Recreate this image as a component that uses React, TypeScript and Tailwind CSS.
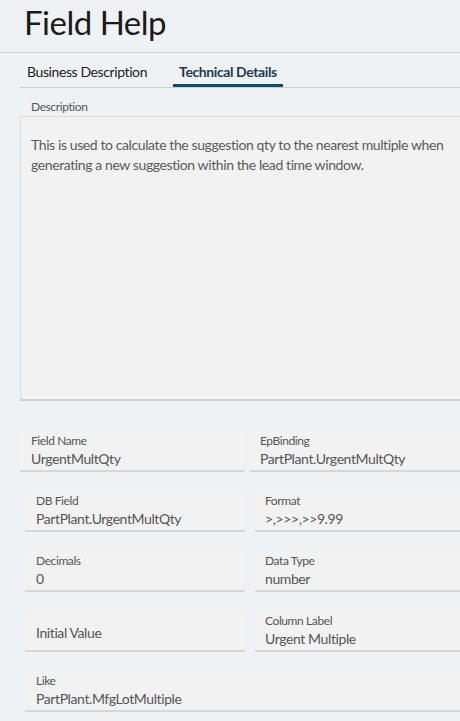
import React from "react";

const font = { fontFamily: '"Lato", "Liberation Sans", sans-serif' };

interface FieldProps {
  label: string;
  value?: string;
  className?: string;
  pad?: string;
}

function Field({ label, value, className = "", pad = "pl-[11px]" }: FieldProps) {
  return (
    <div className={`flex h-10 flex-col justify-end border-b-2 border-[#d4d6d8] bg-[#f2f2f2] pb-[1px] tracking-[-0.4px] ${pad} ${className}`}>
      {value !== undefined ? (
        <>
          <span className="text-[12px] leading-[16px] text-[#555]">{label}</span>
          <span className="text-[14px] leading-[20px] text-[#555]">{value}</span>
        </>
      ) : (
        <span className="pb-[7px] text-[14px] leading-[19px] text-[#555]">{label}</span>
      )}
    </div>
  );
}

export default function App() {
  return (
    <div className="min-h-[721px] w-[460px] overflow-hidden bg-[#eff2f5]" style={font}>
      <div className="h-[53px] border-b border-[#cfd2d5] pl-6 pt-[2px]">
        <h1 className="text-[33px] leading-[40px] tracking-[-0.5px] text-[#1a1a1a]">Field Help</h1>
      </div>

      <div className="ml-5 flex h-[35px] items-end border-b border-[#cfd2d5] tracking-[-0.4px]">
        <button className="px-[7px] pb-[5px] text-[14px] text-[#222]">Business Description</button>
        <button className="ml-[19px] border-b-[3px] border-[#0f4c70] px-[6px] pb-[2px] text-[14px] font-bold text-[#1d3a52]">
          Technical Details
        </button>
      </div>

      <div className="ml-5">
        <div className="pl-[11px] pt-[11px] text-[12px] leading-[16px] tracking-[-0.4px] text-[#555]">Description</div>
        <div className="mt-[1px] h-[285px] border-t border-l border-b-2 border-[#dcdcdc] border-b-[#cfd2d5] bg-[#f2f2f2] pl-[10px] pr-[6px] pt-[18px]">
          <p className="text-[14px] leading-[20px] tracking-[-0.4px] text-[#5a5a5a]">
            This is used to calculate the suggestion qty to the nearest multiple when generating a new suggestion
            within the lead time window.
          </p>
        </div>
      </div>

      <div className="ml-5 mt-[31px] grid grid-cols-[225px_1fr] gap-x-[5px]">
        <Field label="Field Name" value="UrgentMultQty" />
        <Field label="EpBinding" value="PartPlant.UrgentMultQty" pad="pl-[10px]" />
      </div>

      <div className="ml-[25px] mt-5 grid grid-cols-[220px_1fr] gap-x-[10px] gap-y-5">
        <Field label="DB Field" value="PartPlant.UrgentMultQty" />
        <Field label="Format" value=">,>>>,>>9.99" pad="pl-[10px]" />
        <Field label="Decimals" value="0" />
        <Field label="Data Type" value="number" pad="pl-[10px]" />
        <Field label="Initial Value" />
        <Field label="Column Label" value="Urgent Multiple" pad="pl-[10px]" />
        <Field label="Like" value="PartPlant.MfgLotMultiple" className="col-span-2" />
      </div>
    </div>
  );
}
